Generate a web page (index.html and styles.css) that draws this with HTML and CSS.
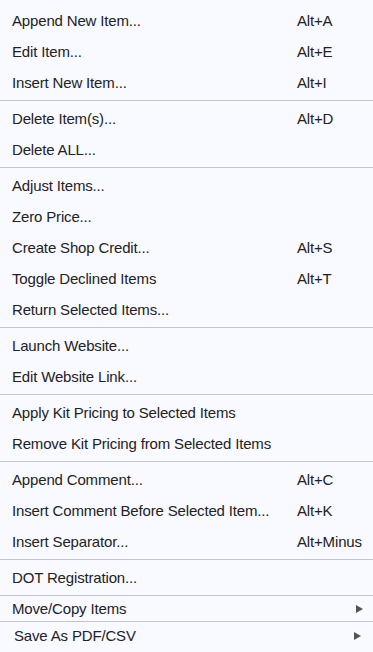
FILE: index.html
```html
<!doctype html>
<html lang="en">
<head>
    <meta charset="UTF-8">
    <meta name="viewport" content="width=device-width, initial-scale=1.0">
    <title>Items menu</title>
    <link rel="stylesheet" href="styles.css">
</head>
<body>
    <ul class="menu">
        <li class="item"><span class="label">Append New Item...</span><span class="key">Alt+A</span></li>
        <li class="item"><span class="label">Edit Item...</span><span class="key">Alt+E</span></li>
        <li class="item"><span class="label">Insert New Item...</span><span class="key">Alt+I</span></li>
        <li class="sep"></li>
        <li class="item"><span class="label">Delete Item(s)...</span><span class="key">Alt+D</span></li>
        <li class="item"><span class="label">Delete ALL...</span></li>
        <li class="sep"></li>
        <li class="item"><span class="label">Adjust Items...</span></li>
        <li class="item"><span class="label">Zero Price...</span></li>
        <li class="item"><span class="label">Create Shop Credit...</span><span class="key">Alt+S</span></li>
        <li class="item"><span class="label">Toggle Declined Items</span><span class="key">Alt+T</span></li>
        <li class="item"><span class="label">Return Selected Items...</span></li>
        <li class="sep"></li>
        <li class="item"><span class="label">Launch Website...</span></li>
        <li class="item"><span class="label">Edit Website Link...</span></li>
        <li class="sep"></li>
        <li class="item"><span class="label">Apply Kit Pricing to Selected Items</span></li>
        <li class="item"><span class="label">Remove Kit Pricing from Selected Items</span></li>
        <li class="sep"></li>
        <li class="item"><span class="label">Append Comment...</span><span class="key">Alt+C</span></li>
        <li class="item"><span class="label">Insert Comment Before Selected Item...</span><span class="key">Alt+K</span></li>
        <li class="item"><span class="label">Insert Separator...</span><span class="key">Alt+Minus</span></li>
        <li class="sep"></li>
        <li class="item"><span class="label">DOT Registration...</span></li>
        <li class="sep"></li>
        <li class="sub"><span class="label">Move/Copy Items</span><span class="arrow"></span></li>
        <li class="sep"></li>
        <li class="sub sub-last"><span class="label">Save As PDF/CSV</span><span class="arrow"></span></li>
    </ul>
</body>
</html>
```

FILE: styles.css
```css
*{
    padding: 0;
    margin: 0;
    box-sizing: border-box;
}
html,
body{
    background: #f9faff;
}
body{
    font-family: "Liberation Sans", Arial, sans-serif;
    font-size: 15px;
    letter-spacing: -0.16px;
    color: #222;
}
.menu{
    list-style: none;
    width: 373px;
    padding-top: 5px;
}
.item{
    display: grid;
    grid-template-columns: 285px 1fr;
    align-items: center;
    height: 31px;
    padding-left: 12px;
}
.key{
    white-space: nowrap;
}
.sep{
    height: 5px;
    padding: 2px 0;
}
.sep::after{
    content: "";
    display: block;
    height: 1px;
    background: #c3c3cb;
}
.sub{
    display: flex;
    align-items: center;
    justify-content: space-between;
    height: 21px;
    padding-left: 12px;
    padding-right: 10px;
}
.sub-last{
    height: 23px;
    padding-left: 14px;
    padding-right: 12px;
}
.arrow{
    width: 0;
    height: 0;
    border-style: solid;
    border-width: 4px 0 4px 7px;
    border-color: transparent transparent transparent #555;
}
```
